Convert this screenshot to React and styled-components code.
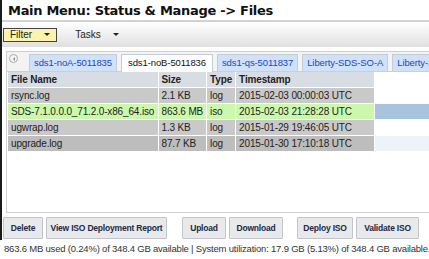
import React from 'react';
import styled, { createGlobalStyle } from 'styled-components';

const GlobalStyle = createGlobalStyle`
  html, body {
    margin: 0;
    padding: 0;
    background: #fff;
  }
  body {
    font-family: "Liberation Sans", Arial, sans-serif;
    color: #222;
  }
`

const Frame = styled.div`
  border-left: 2px solid #1a1a1a;
  width: 427px;
`

const Title = styled.h1`
  margin: 0;
  height: 22px;
  padding: 3px 0 0 6px;
  box-sizing: border-box;
  font-family: "DejaVu Sans", sans-serif;
  font-size: 13px;
  font-weight: bold;
  line-height: 16px;
  color: #111;
  border-bottom: 2px solid #d2d2d2;
  white-space: nowrap;
  letter-spacing: -0.3px;
`

const Toolbar = styled.div`
  display: flex;
  align-items: center;
  height: 25px;
  padding: 0 0 0 1px;
  gap: 14px;
  background: linear-gradient(#ffffff, #e0e0e0);
`

const MenuButton = styled.div`
  display: flex;
  align-items: center;
  justify-content: center;
  gap: 12px;
  box-sizing: border-box;
  width: ${props => props.width}px;
  height: 14px;
  font-size: 10px;
  color: #222;
  ${props => props.active && `
    background: #fbf3ae;
    border: 1px solid #444;
  `}
`

const Caret = styled.span`
  width: 0;
  height: 0;
  border-left: 3px solid transparent;
  border-right: 3px solid transparent;
  border-top: 3px solid #222;
`

const Panel = styled.div`
  margin: 4px 0 0 4px;
  height: 162px;
  border: 1px solid #cfcfcf;
  border-right: none;
  box-sizing: border-box;
  overflow: hidden;
`

const TabStrip = styled.div`
  display: flex;
  align-items: flex-end;
  height: 19px;
  border-bottom: 1px solid #c8d0da;
  background: #f3f3f3;
  white-space: nowrap;
`

const ScrollButton = styled.div`
  flex: none;
  align-self: flex-start;
  width: 7px;
  height: 7px;
  margin: 2px 11px 0 2px;
  border-radius: 50%;
  border: 1px solid #aaa;
  background: #f4f4f4;
  display: flex;
  align-items: center;
  justify-content: center;

  &::after {
    content: '';
    border-top: 2px solid transparent;
    border-bottom: 2px solid transparent;
    border-right: 2px solid #888;
  }
`

const Tab = styled.div`
  flex: none;
  height: 16px;
  line-height: 16px;
  padding: 0 4px;
  margin-right: 4px;
  font-size: 9.5px;
  letter-spacing: -0.1px;
  color: #2346c4;
  background: #d0e1fb;
  border: 1px solid #c4ccd8;
  border-bottom: none;
  ${props => props.active && `
    color: #111;
    background: #fff;
    height: 17px;
    margin-bottom: -1px;
    padding: 0 6px;
  `}
`

const Table = styled.table`
  border-collapse: collapse;
  margin: 0 0 0 1px;
  width: 422px;
  font-size: 10px;
  letter-spacing: -0.15px;
`

const HeadCell = styled.th`
  text-align: left;
  font-weight: bold;
  background: ${props => props.blank ? '#fff' : '#d8dde3'};
  height: 15px;
  padding: 0 3px;
  border-right: 1px solid #fff;
  border-bottom: 1px solid #fff;
  color: #222;
`

const Cell = styled.td`
  height: 15px;
  padding: 0 3px;
  white-space: nowrap;
  border-right: 1px solid #fff;
  border-bottom: 1px solid #fff;
  background: ${props => props.bg};
  color: #222;
`

const ButtonBar = styled.div`
  display: flex;
  gap: 3px;
  padding: 4px 0 1px 1px;
`

const ActionButton = styled.button`
  flex: none;
  width: ${props => props.w}px;
  height: 22px;
  padding: 0;
  white-space: nowrap;
  font-family: "Liberation Sans", Arial, sans-serif;
  font-size: 8.5px;
  font-weight: bold;
  letter-spacing: -0.2px;
  color: #1d2a44;
  background: #e7e9eb;
  border: 1px solid #c2c6ca;
  border-radius: 1px;
  margin-left: ${props => props.gap || 0}px;
`

const Status = styled.div`
  padding: 3px 0 0 4px;
  font-size: 9.5px;
  letter-spacing: -0.2px;
  color: #333;
  white-space: nowrap;
`

const files = [
  { name: 'rsync.log', size: '2.1 KB', type: 'log', time: '2015-02-03 00:00:03 UTC', bg: '#c9c9c9', tail: '#fff' },
  { name: 'SDS-7.1.0.0.0_71.2.0-x86_64.iso', size: '863.6 MB', type: 'iso', time: '2015-02-03 21:28:28 UTC', bg: '#ccf8ad', tail: '#a9c3df' },
  { name: 'ugwrap.log', size: '1.3 KB', type: 'log', time: '2015-01-29 19:46:05 UTC', bg: '#c9c9c9', tail: '#fff' },
  { name: 'upgrade.log', size: '87.7 KB', type: 'log', time: '2015-01-30 17:10:18 UTC', bg: '#bdbdbd', tail: '#eef3fa' },
]

const tabs = ['sds1-noA-5011835', 'sds1-noB-5011836', 'sds1-qs-5011837', 'Liberty-SDS-SO-A', 'Liberty-SDS-SO-B']

export default function App() {
  return (
    <>
      <GlobalStyle />
      <Frame>
        <Title>Main Menu: Status &amp; Manage -&gt; Files</Title>
        <Toolbar>
          <MenuButton active width={54}>Filter <Caret /></MenuButton>
          <MenuButton width={52}>Tasks <Caret /></MenuButton>
        </Toolbar>
        <Panel>
          <TabStrip>
            <ScrollButton />
            {tabs.map((t, i) => (
              <Tab key={t} active={i === 1}>{t}</Tab>
            ))}
          </TabStrip>
          <Table>
            <colgroup>
              <col style={{ width: 150 }} />
              <col style={{ width: 45 }} />
              <col style={{ width: 26 }} />
              <col style={{ width: 139 }} />
              <col />
            </colgroup>
            <thead>
              <tr>
                <HeadCell>File Name</HeadCell>
                <HeadCell>Size</HeadCell>
                <HeadCell>Type</HeadCell>
                <HeadCell>Timestamp</HeadCell>
                <HeadCell blank />
              </tr>
            </thead>
            <tbody>
              {files.map(f => (
                <tr key={f.name}>
                  <Cell bg={f.bg}>{f.name}</Cell>
                  <Cell bg={f.bg}>{f.size}</Cell>
                  <Cell bg={f.bg}>{f.type}</Cell>
                  <Cell bg={f.bg}>{f.time}</Cell>
                  <Cell bg={f.tail} />
                </tr>
              ))}
            </tbody>
          </Table>
        </Panel>
        <ButtonBar>
          <ActionButton w={40}>Delete</ActionButton>
          <ActionButton w={121}>View ISO Deployment Report</ActionButton>
          <ActionButton w={44} gap={12}>Upload</ActionButton>
          <ActionButton w={54}>Download</ActionButton>
          <ActionButton w={56} gap={11}>Deploy ISO</ActionButton>
          <ActionButton w={63}>Validate ISO</ActionButton>
        </ButtonBar>
      </Frame>
      <Status>863.6 MB used (0.24%) of 348.4 GB available | System utilization: 17.9 GB (5.13%) of 348.4 GB available.</Status>
    </>
  )
}
